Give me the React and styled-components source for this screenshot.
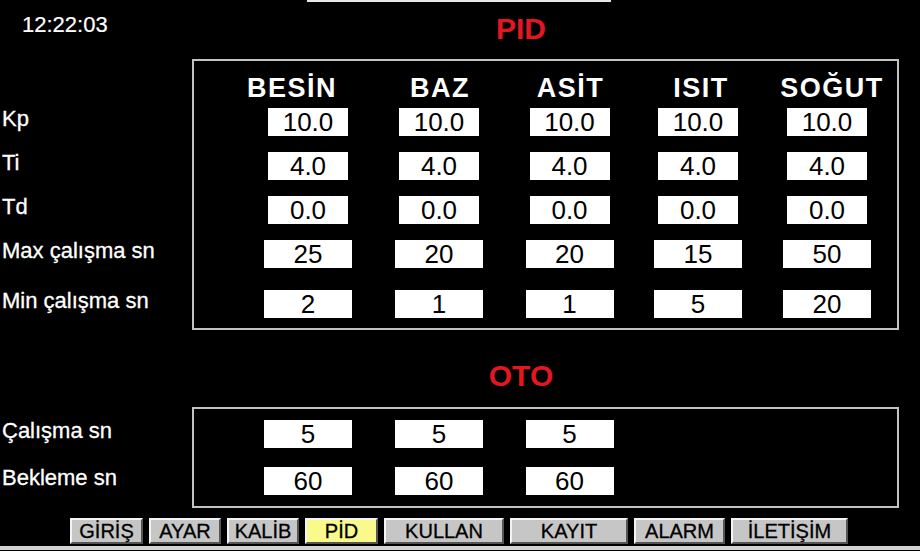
import React from 'react';
import styled, { createGlobalStyle } from 'styled-components';

const GlobalStyle = createGlobalStyle`
  body {
    margin: 0;
    background: #000;
  }
`;

const Screen = styled.div`
  width: 920px;
  height: 551px;
  background: #000;
  color: #fff;
  display: flex;
  flex-direction: column;
  overflow: hidden;
  font-family: "Liberation Sans", Arial, sans-serif;
`;

const TopEdge = styled.div`
  height: 2px;
  width: 304px;
  margin-left: 307px;
  background: #e6e6e6;
  flex-shrink: 0;
`;

const TopBar = styled.div`
  display: flex;
  align-items: flex-start;
  height: 57px;
  padding-top: 11px;
  box-sizing: border-box;
  flex-shrink: 0;
`;

const Clock = styled.div`
  width: 122px;
  padding-left: 22px;
  box-sizing: border-box;
  font-size: 22px;
  line-height: 24px;
  -webkit-text-stroke: 0.2px #fff;
`;

const Title = styled.div`
  flex: 1;
  text-align: center;
  color: #e3171f;
  font-size: 30px;
  font-weight: bold;
  line-height: 32px;
`;

const TitleRow = styled.div`
  display: flex;
  padding-left: 122px;
  margin-top: 30px;
  flex-shrink: 0;
`;

const Section = styled.div`
  display: flex;
  align-items: flex-start;
  margin-top: ${(p) => p.$top || 0}px;
  flex-shrink: 0;
`;

const LabelCol = styled.div`
  width: 192px;
  flex-shrink: 0;
  display: flex;
  flex-direction: column;
  gap: ${(p) => p.$gap}px;
  padding-top: ${(p) => p.$top}px;
  box-sizing: border-box;
`;

const Label = styled.div`
  height: 28px;
  margin-top: ${(p) => p.$drop || 0}px;
  padding-left: 2px;
  font-size: 22px;
  line-height: 22px;
  white-space: nowrap;
  -webkit-text-stroke: 0.3px #fff;
`;

const Frame = styled.div`
  width: 707px;
  box-sizing: border-box;
  border: 2px solid #c2c2c2;
  padding: ${(p) => p.$padTop}px 0 ${(p) => p.$padBottom}px 49px;
`;

const columns = '130px 132px 129px 128px 130px';

const HeaderRow = styled.div`
  display: grid;
  grid-template-columns: ${columns};
  height: 30px;
  margin-bottom: 5px;
`;

const Header = styled.div`
  text-align: center;
  font-size: 27px;
  font-weight: bold;
  letter-spacing: 1.5px;
  line-height: 30px;
  white-space: nowrap;
  padding-left: ${(p) => (p.$shift > 0 ? p.$shift * 2 : 0)}px;
  padding-right: ${(p) => (p.$shift < 0 ? -p.$shift * 2 : 0)}px;
`;

const Rows = styled.div`
  display: flex;
  flex-direction: column;
  gap: ${(p) => p.$gap}px;
`;

const Row = styled.div`
  display: grid;
  grid-template-columns: ${columns};
  height: 28px;
  margin-top: ${(p) => p.$drop || 0}px;
`;

const Value = styled.div`
  justify-self: center;
  width: ${(p) => (p.$wide ? 88 : 80)}px;
  height: 28px;
  background: #fff;
  color: #000;
  font-size: 26px;
  line-height: 29px;
  text-align: center;
`;

const Nav = styled.div`
  display: flex;
  gap: 6px;
  padding-left: 70px;
  margin-top: 10px;
  height: 26px;
  flex-shrink: 0;
`;

const NavButton = styled.button`
  width: ${(p) => p.$w}px;
  height: 26px;
  box-sizing: border-box;
  padding: 0;
  margin: 0;
  background: ${(p) => (p.$active ? '#f9f98c' : '#c6c6c6')};
  border: 2px solid;
  border-color: #f4f4f4 #555 #555 #f4f4f4;
  color: #000;
  font-family: "Liberation Sans", Arial, sans-serif;
  font-size: 20px;
  line-height: 22px;
  text-align: center;
  -webkit-text-stroke: 0.3px #000;
`;

const BottomStrip = styled.div`
  height: 4px;
  margin-top: 2px;
  background: #d2d2d2;
  flex-shrink: 0;
`;

const headers = [
  { name: 'BESİN', shift: -16 },
  { name: 'BAZ', shift: 1 },
  { name: 'ASİT', shift: 1 },
  { name: 'ISIT', shift: 3 },
  { name: 'SOĞUT', shift: 5 },
];

const pidRows = [
  { label: 'Kp', values: ['10.0', '10.0', '10.0', '10.0', '10.0'] },
  { label: 'Ti', values: ['4.0', '4.0', '4.0', '4.0', '4.0'] },
  { label: 'Td', values: ['0.0', '0.0', '0.0', '0.0', '0.0'] },
  { label: 'Max çalışma sn', values: ['25', '20', '20', '15', '50'], wide: true },
  { label: 'Min çalışma sn', values: ['2', '1', '1', '5', '20'], wide: true, drop: 6 },
];

const otoRows = [
  { label: 'Çalışma sn', values: ['5', '5', '5'] },
  { label: 'Bekleme sn', values: ['60', '60', '60'] },
];

const navItems = [
  { text: 'GİRİŞ', w: 73 },
  { text: 'AYAR', w: 72 },
  { text: 'KALİB', w: 72 },
  { text: 'PİD', w: 73, active: true },
  { text: 'KULLAN', w: 120 },
  { text: 'KAYIT', w: 118 },
  { text: 'ALARM', w: 91 },
  { text: 'İLETİŞİM', w: 117 },
];

export default function App() {
  return (
    <>
      <GlobalStyle />
      <Screen>
        <TopEdge />
        <TopBar>
          <Clock>12:22:03</Clock>
          <Title>PID</Title>
        </TopBar>

        <Section>
          <LabelCol $top={49} $gap={16}>
            {pidRows.map((r) => (
              <Label key={r.label} $drop={r.drop}>
                {r.label}
              </Label>
            ))}
          </LabelCol>
          <Frame $padTop={12} $padBottom={10}>
            <HeaderRow>
              {headers.map((h) => (
                <Header key={h.name} $shift={h.shift}>
                  {h.name}
                </Header>
              ))}
            </HeaderRow>
            <Rows $gap={16}>
              {pidRows.map((r) => (
                <Row key={r.label} $drop={r.drop}>
                  {r.values.map((v, i) => (
                    <Value key={i} $wide={r.wide}>
                      {v}
                    </Value>
                  ))}
                </Row>
              ))}
            </Rows>
          </Frame>
        </Section>

        <TitleRow>
          <Title>OTO</Title>
        </TitleRow>

        <Section $top={15}>
          <LabelCol $top={13} $gap={19}>
            {otoRows.map((r) => (
              <Label key={r.label}>{r.label}</Label>
            ))}
          </LabelCol>
          <Frame $padTop={11} $padBottom={11}>
            <Rows $gap={19}>
              {otoRows.map((r) => (
                <Row key={r.label}>
                  {r.values.map((v, i) => (
                    <Value key={i} $wide>
                      {v}
                    </Value>
                  ))}
                </Row>
              ))}
            </Rows>
          </Frame>
        </Section>

        <Nav>
          {navItems.map((n) => (
            <NavButton key={n.text} $w={n.w} $active={n.active}>
              {n.text}
            </NavButton>
          ))}
        </Nav>
        <BottomStrip />
      </Screen>
    </>
  );
}
